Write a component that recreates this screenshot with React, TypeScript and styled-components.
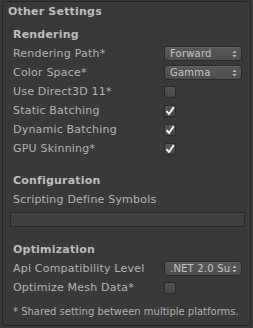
import React from 'react'
import styled, { createGlobalStyle } from 'styled-components'

const GlobalStyle = createGlobalStyle`
    body {
        margin: 0;
        background: #393939;
        font-family: "DejaVu Sans", "Liberation Sans", sans-serif;
        font-size: 11px;
        color: #b4b4b4;
    }
`
const Panel = styled.div`
    width: 249px;
    height: 325px;
    box-sizing: border-box;
    margin: 1px 0 0 2px;
    border: 1px solid #262626;
    border-radius: 4px;
    background: #393939;
    padding: 0 0 0 5px;
    display: flex;
    flex-direction: column;
`
const Title = styled.div`
    height: 19px;
    line-height: 19px;
    font-weight: bold;
    color: #bdbdbd;
    letter-spacing: 0.2px;
`
const Section = styled.div<{ $top: number }>`
    margin-top: ${p => p.$top}px;
    padding-left: 5px;
    display: flex;
    flex-direction: column;
`
const Header = styled.div`
    height: 19px;
    line-height: 19px;
    font-weight: bold;
    color: #bdbdbd;
    letter-spacing: 0.2px;
`
const Row = styled.div`
    height: 19px;
    display: grid;
    grid-template-columns: 151px 78px;
    align-items: center;
`
const Label = styled.span`
    line-height: 19px;
    white-space: nowrap;
    letter-spacing: 0.2px;
`
const Select = styled.div`
    height: 15px;
    box-sizing: border-box;
    border: 1px solid #2a2a2a;
    border-radius: 3px;
    background: linear-gradient(#585858, #4e4e4e);
    box-shadow: inset 0 1px 0 #636363;
    display: flex;
    align-items: center;
    padding: 0 4px 0 5px;
    color: #c4c4c4;
    font-size: 10px;
    letter-spacing: 0.2px;
`
const SelectText = styled.span`
    flex: 1;
    min-width: 0;
    overflow: hidden;
    white-space: nowrap;
`
const Arrows = styled.svg`
    flex: none;
    margin-left: 1px;
`
const Check = styled.div`
    width: 12px;
    height: 12px;
    box-sizing: border-box;
    border: 1px solid #2a2a2a;
    border-radius: 2px;
    background: linear-gradient(#555555, #484848);
    display: flex;
    align-items: center;
    justify-content: center;
`
const TextField = styled.div`
    height: 15px;
    box-sizing: border-box;
    margin: 3px 5px 0 -3px;
    border: 1px solid #292929;
    background: #414141;
`
const Note = styled.div`
    margin-top: 9px;
    padding-left: 5px;
    font-size: 10px;
    color: #b0b0b0;
    white-space: nowrap;
`

function Dropdown({ value }: { value: string }) {
  return (
    <Select>
      <SelectText>{value}</SelectText>
      <Arrows width="5" height="8" viewBox="0 0 5 8">
        <path d="M2.5 0.5 L4.5 3 L0.5 3 Z M2.5 7.5 L4.5 5 L0.5 5 Z" fill="#bdbdbd" />
      </Arrows>
    </Select>
  )
}

function Toggle({ on }: { on?: boolean }) {
  return (
    <Check>
      {on && (
        <svg width="10" height="10" viewBox="0 0 10 10">
          <path d="M1.5 5.2 L4 8 L8.8 1.2" stroke="#f0f0f0" strokeWidth="2" fill="none" />
        </svg>
      )}
    </Check>
  )
}

export default function App() {
  return (
    <>
      <GlobalStyle />
      <Panel>
        <Title>Other Settings</Title>
        <Section $top={4}>
          <Header>Rendering</Header>
          <Row><Label>Rendering Path*</Label><Dropdown value="Forward" /></Row>
          <Row><Label>Color Space*</Label><Dropdown value="Gamma" /></Row>
          <Row><Label>Use Direct3D 11*</Label><Toggle /></Row>
          <Row><Label>Static Batching</Label><Toggle on /></Row>
          <Row><Label>Dynamic Batching</Label><Toggle on /></Row>
          <Row><Label>GPU Skinning*</Label><Toggle on /></Row>
        </Section>
        <Section $top={13}>
          <Header>Configuration</Header>
          <Label>Scripting Define Symbols</Label>
          <TextField />
        </Section>
        <Section $top={13}>
          <Header>Optimization</Header>
          <Row><Label>Api Compatibility Level</Label><Dropdown value=".NET 2.0 Subset" /></Row>
          <Row><Label>Optimize Mesh Data*</Label><Toggle /></Row>
        </Section>
        <Note>* Shared setting between multiple platforms.</Note>
      </Panel>
    </>
  )
}
